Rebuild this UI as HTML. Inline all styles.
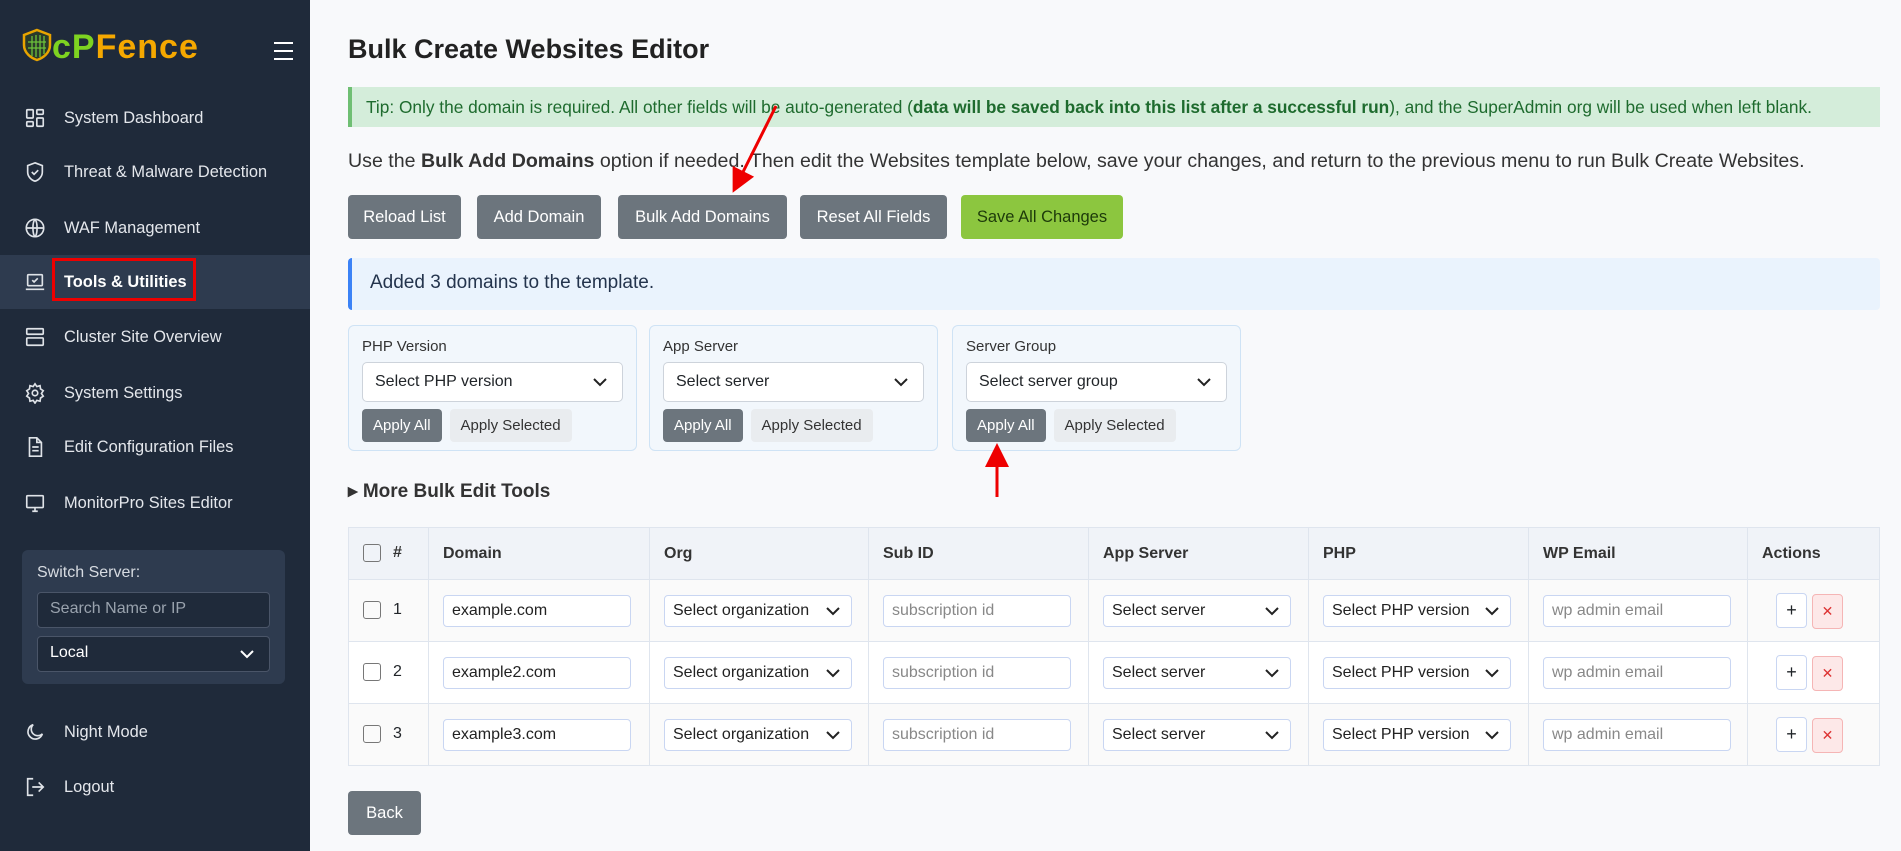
<!DOCTYPE html>
<html><head><meta charset="utf-8"><style>
*{box-sizing:border-box;margin:0;padding:0}
body{width:1901px;height:851px;overflow:hidden;font-family:"Liberation Sans",sans-serif;background:#f8f9fb;color:#212529;position:relative}
.sb{position:absolute;left:0;top:0;width:310px;height:851px;background:#1f2a3a;color:#e4e7ec}
.logo{position:absolute;left:22px;top:28px;font-size:34px;font-weight:bold;letter-spacing:1px}
.ham{position:absolute;left:274px;top:42px;width:19px}
.ham i{display:block;height:2px;background:#fff;margin-bottom:6px}
.it{position:absolute;left:0;width:310px;height:54px;display:flex;align-items:center;padding-left:24px;font-size:16.4px}
.it svg{width:22px;height:22px;margin-right:18px;stroke:#dfe3e8;fill:none;stroke-width:1.8}
.act{background:#2e3b4f;font-weight:bold;color:#fff}
.redbox{position:absolute;left:52px;top:258px;width:144px;height:43px;border:3px solid #e00}
.sw{position:absolute;left:22px;top:550px;width:263px;height:134px;background:#2e3b4f;border-radius:6px;padding:14px 15px}
.sw .l{font-size:16px;color:#d7dbe1;margin-bottom:10px}
.sw .in{height:36px;border:1px solid #4a5568;background:#1f2a3a;border-radius:4px;padding:7px 12px;color:#9aa3ae;font-size:16px;margin-bottom:8px}
.sw .sel{height:36px;border:1px solid #4a5568;background:#1f2a3a;border-radius:4px;padding:7px 12px;color:#fff;font-size:16px;position:relative}
.main{position:absolute;left:348px;top:0;width:1532px}
h1{position:absolute;top:34px;font-size:27px;font-weight:bold;color:#222}
.tip{position:absolute;top:87px;left:0;width:1532px;height:40px;background:#d4edda;border-left:4px solid #6fbf73;color:#1e6b2e;font-size:17.3px;padding:10px 14px;white-space:nowrap}
.use{position:absolute;top:150px;font-size:19.6px;color:#333;white-space:nowrap}
.btn{position:absolute;top:195px;height:44px;background:#6c757d;color:#fff;border-radius:4px;font-size:16.5px;display:flex;align-items:center;justify-content:center}
.info{position:absolute;top:258px;left:0;width:1532px;height:52px;background:#eaf3fd;border-left:4px solid #3b82f6;border-radius:4px;color:#24344d;font-size:19px;padding:14px 18px}
.card{position:absolute;top:325px;width:289px;height:126px;border:1px solid #cfe3f5;border-radius:6px;background:#f2f7fc;padding:12px 13px}
.card .t{font-size:15px;color:#333;margin-bottom:7px}
.card .s{height:40px;border:1px solid #cdd3db;background:#fff;border-radius:5px;padding:10px 12px;font-size:16px;position:relative}
.chev{position:absolute;right:14px;top:11px;width:16px;height:16px}
.card .b{display:flex;margin-top:7px;gap:8px}
.card .b span{height:33px;padding:8px 11px;font-size:15px;border-radius:4px;background:#e9ecef;color:#333}
.card .b span.d{background:#6c757d;color:#fff}
.more{position:absolute;top:480px;font-size:19px;font-weight:bold;color:#333}
table{position:absolute;top:527px;left:0;width:1532px;border-collapse:collapse;font-size:16px}
td,th{border:1px solid #dfe5ee;text-align:left;padding:0 14px}
th{height:52px;background:#f0f3f8;font-weight:bold;color:#333}
td{height:62px;background:#fafafa}
tr.w td{background:#fff}
.cb{display:inline-block;width:18px;height:18px;border:1px solid #777;border-radius:3px;vertical-align:middle;margin-right:12px}
.inp{height:32px;width:188px;border:1px solid #c9d6f2;border-radius:4px;background:#fff;padding:6px 8px;font-size:16px;color:#222;position:relative}
.ph{color:#888}
.ab{display:inline-block;width:31px;height:35px;border:1px solid #c9d6f2;border-radius:4px;background:#fff;text-align:center;line-height:33px;font-size:18px;margin-right:5px}
.ab.x{background:#fde8e8;border-color:#f5b5b5;color:#d33;font-size:14px}
</style></head><body>
<div class="sb">
<div class="logo"><svg width="30" height="34" viewBox="0 0 30 34" style="vertical-align:-4px"><path d="M15 2 L28 7 V17 C28 25 21 30 15 32 C9 30 2 25 2 17 V7Z" fill="#2a3a2a" stroke="#e8a400" stroke-width="2.5"/><path d="M10 8V28M14 7V29M18 7V29M22 8V26M6 14H24M6 20H24" stroke="#6cc23a" stroke-width="1.3"/></svg><span style="color:#7ed321">cP</span><span style="color:#f5a800">Fence</span></div>
<div class="ham"><i></i><i></i><i></i></div>
<div class="it" style="top:91px"><svg viewBox="0 0 24 24"><rect x="3" y="3" width="7" height="9" rx="1"/><rect x="14" y="3" width="7" height="5" rx="1"/><rect x="3" y="16" width="7" height="5" rx="1"/><rect x="14" y="12" width="7" height="9" rx="1"/></svg>System Dashboard</div>
<div class="it" style="top:145px"><svg viewBox="0 0 24 24"><path d="M12 2l8 3v7c0 5-4 9-8 10-4-1-8-5-8-10V5z"/><path d="M8.5 12l2.5 2.5 4.5-4.5"/></svg>Threat &amp; Malware Detection</div>
<div class="it" style="top:201px"><svg viewBox="0 0 24 24"><circle cx="12" cy="12" r="9.5"/><path d="M2.5 12h19M12 2.5c3 3 3 16 0 19M12 2.5c-3 3-3 16 0 19"/></svg>WAF Management</div>
<div class="it act" style="top:255px"><svg viewBox="0 0 24 24"><rect x="4" y="4" width="16" height="12" rx="1"/><path d="M2 20h20M9 10l2 2 4-4"/></svg>Tools &amp; Utilities</div>
<div class="redbox"></div>
<div class="it" style="top:310px"><svg viewBox="0 0 24 24"><rect x="3" y="3" width="18" height="6" rx="1"/><rect x="3" y="13" width="18" height="8" rx="1"/></svg>Cluster Site Overview</div>
<div class="it" style="top:366px"><svg viewBox="0 0 24 24"><circle cx="12" cy="12" r="3"/><path d="M12 2l2 3 3.5-1 .5 3.5 3 2-2 3 2 3-3 2-.5 3.5-3.5-1-2 3-2-3-3.5 1-.5-3.5-3-2 2-3-2-3 3-2 .5-3.5 3.5 1z"/></svg>System Settings</div>
<div class="it" style="top:420px"><svg viewBox="0 0 24 24"><path d="M6 2h8l5 5v15H6z"/><path d="M14 2v5h5M9 12h7M9 16h7"/></svg>Edit Configuration Files</div>
<div class="it" style="top:476px"><svg viewBox="0 0 24 24"><rect x="3" y="4" width="18" height="13" rx="1"/><path d="M9 21h6M12 17v4"/></svg>MonitorPro Sites Editor</div>
<div class="sw"><div class="l">Switch Server:</div><div class="in">Search Name or IP</div><div class="sel">Local<svg class="chev" viewBox="0 0 16 16" style="top:9px"><path d="M2 5l6 6 6-6" stroke="#fff" stroke-width="2" fill="none"/></svg></div></div>
<div class="it" style="top:705px"><svg viewBox="0 0 24 24"><path d="M20 14A8 8 0 1 1 10 4a6 6 0 0 0 10 10z"/></svg>Night Mode</div>
<div class="it" style="top:760px"><svg viewBox="0 0 24 24"><path d="M10 3H4v18h6M16 7l5 5-5 5M21 12H9"/></svg>Logout</div>
</div>
<div class="main">
<h1>Bulk Create Websites Editor</h1>
<div class="tip">Tip: Only the domain is required. All other fields will be auto-generated (<b>data will be saved back into this list after a successful run</b>), and the SuperAdmin org will be used when left blank.</div>
<div class="use">Use the <b>Bulk Add Domains</b> option if needed. Then edit the Websites template below, save your changes, and return to the previous menu to run Bulk Create Websites.</div>
<div class="btn" style="left:0;width:113px">Reload List</div>
<div class="btn" style="left:129px;width:124px">Add Domain</div>
<div class="btn" style="left:270px;width:169px">Bulk Add Domains</div>
<div class="btn" style="left:452px;width:147px">Reset All Fields</div>
<div class="btn" style="left:613px;width:162px;background:#8cc63f;color:#1d3a0a">Save All Changes</div>
<div class="info">Added 3 domains to the template.</div>
<div class="card" style="left:0"><div class="t">PHP Version</div><div class="s">Select PHP version<svg class="chev" viewBox="0 0 16 16"><path d="M2 5l6 6 6-6" stroke="#222" stroke-width="2" fill="none"/></svg></div><div class="b"><span class="d">Apply All</span><span>Apply Selected</span></div></div>
<div class="card" style="left:301px"><div class="t">App Server</div><div class="s">Select server<svg class="chev" viewBox="0 0 16 16"><path d="M2 5l6 6 6-6" stroke="#222" stroke-width="2" fill="none"/></svg></div><div class="b"><span class="d">Apply All</span><span>Apply Selected</span></div></div>
<div class="card" style="left:604px"><div class="t">Server Group</div><div class="s">Select server group<svg class="chev" viewBox="0 0 16 16"><path d="M2 5l6 6 6-6" stroke="#222" stroke-width="2" fill="none"/></svg></div><div class="b"><span class="d">Apply All</span><span>Apply Selected</span></div></div>
<div class="more">▸ More Bulk Edit Tools</div>
<table>
<tr><th style="width:80px"><span class="cb"></span>#</th><th style="width:221px">Domain</th><th style="width:219px">Org</th><th style="width:220px">Sub ID</th><th style="width:220px">App Server</th><th style="width:220px">PHP</th><th style="width:219px">WP Email</th><th>Actions</th></tr>
<tr><td><span class="cb"></span>1</td><td><div class="inp">example.com</div></td><td><div class="inp">Select organization<svg class="chev" viewBox="0 0 16 16" style="top:7px;right:10px"><path d="M2 5l6 6 6-6" stroke="#222" stroke-width="2" fill="none"/></svg></div></td><td><div class="inp ph">subscription id</div></td><td><div class="inp">Select server<svg class="chev" viewBox="0 0 16 16" style="top:7px;right:10px"><path d="M2 5l6 6 6-6" stroke="#222" stroke-width="2" fill="none"/></svg></div></td><td><div class="inp">Select PHP version<svg class="chev" viewBox="0 0 16 16" style="top:7px;right:10px"><path d="M2 5l6 6 6-6" stroke="#222" stroke-width="2" fill="none"/></svg></div></td><td><div class="inp ph">wp admin email</div></td><td style="padding-left:28px"><span class="ab">+</span><span class="ab x">✕</span></td></tr>
<tr class="w"><td><span class="cb"></span>2</td><td><div class="inp">example2.com</div></td><td><div class="inp">Select organization<svg class="chev" viewBox="0 0 16 16" style="top:7px;right:10px"><path d="M2 5l6 6 6-6" stroke="#222" stroke-width="2" fill="none"/></svg></div></td><td><div class="inp ph">subscription id</div></td><td><div class="inp">Select server<svg class="chev" viewBox="0 0 16 16" style="top:7px;right:10px"><path d="M2 5l6 6 6-6" stroke="#222" stroke-width="2" fill="none"/></svg></div></td><td><div class="inp">Select PHP version<svg class="chev" viewBox="0 0 16 16" style="top:7px;right:10px"><path d="M2 5l6 6 6-6" stroke="#222" stroke-width="2" fill="none"/></svg></div></td><td><div class="inp ph">wp admin email</div></td><td style="padding-left:28px"><span class="ab">+</span><span class="ab x">✕</span></td></tr>
<tr><td><span class="cb"></span>3</td><td><div class="inp">example3.com</div></td><td><div class="inp">Select organization<svg class="chev" viewBox="0 0 16 16" style="top:7px;right:10px"><path d="M2 5l6 6 6-6" stroke="#222" stroke-width="2" fill="none"/></svg></div></td><td><div class="inp ph">subscription id</div></td><td><div class="inp">Select server<svg class="chev" viewBox="0 0 16 16" style="top:7px;right:10px"><path d="M2 5l6 6 6-6" stroke="#222" stroke-width="2" fill="none"/></svg></div></td><td><div class="inp">Select PHP version<svg class="chev" viewBox="0 0 16 16" style="top:7px;right:10px"><path d="M2 5l6 6 6-6" stroke="#222" stroke-width="2" fill="none"/></svg></div></td><td><div class="inp ph">wp admin email</div></td><td style="padding-left:28px"><span class="ab">+</span><span class="ab x">✕</span></td></tr>
</table>
<div class="btn" style="top:791px;left:0;width:73px">Back</div>
</div>
<svg style="position:absolute;left:0;top:0" width="1901" height="851"><defs><marker id="a" markerWidth="8" markerHeight="8" refX="4" refY="4" orient="auto"><path d="M0 0L8 4L0 8z" fill="#e00"/></marker></defs><path d="M776 106L738 182" stroke="#e00" stroke-width="3" marker-end="url(#a)"/><path d="M997 497V455" stroke="#e00" stroke-width="3" marker-end="url(#a)"/></svg>
</body></html>
